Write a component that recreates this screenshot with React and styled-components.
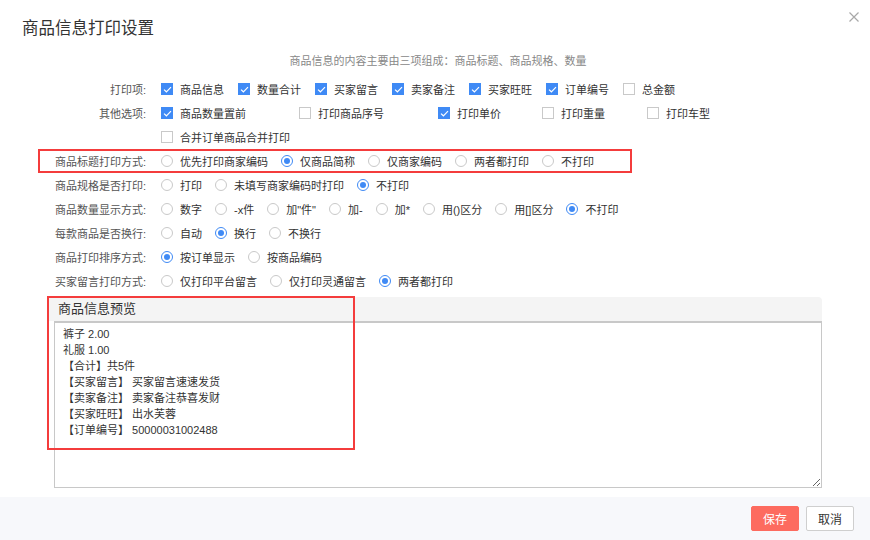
import React from "react";
import styled, { createGlobalStyle, css } from "styled-components";

const Global = createGlobalStyle`
  html, body { margin: 0; padding: 0; background: #fff; }
  body { font-family: "Liberation Sans", "Noto Sans CJK SC", sans-serif; color: #333; }
  *, *::before, *::after { box-sizing: border-box; }
`;

const Dialog = styled.div`
  width: 870px;
  height: 540px;
  display: flex;
  flex-direction: column;
  background: #fff;
  overflow: hidden;
`;

const Body = styled.div`
  flex: 1;
  display: flex;
  flex-direction: column;
`;

const Header = styled.div`
  height: 50px;
  display: flex;
  align-items: flex-start;
  justify-content: space-between;
  padding: 17px 10px 0 22px;
`;

const Title = styled.h1`
  margin: 0;
  font-size: 16.5px;
  font-weight: normal;
  line-height: 22px;
  color: #333;
`;

const Close = styled.button`
  border: 0;
  background: none;
  padding: 0;
  width: 12px;
  height: 12px;
  margin-top: -6px;
  display: flex;
  cursor: pointer;
`;

const Subtitle = styled.div`
  font-size: 11px;
  line-height: 22px;
  color: #888;
  text-align: center;
  padding-left: 6px;
  height: 22px;
  margin-bottom: 5px;
`;

const Form = styled.div`
  display: flex;
  flex-direction: column;
`;

const Row = styled.div`
  position: relative;
  display: flex;
  align-items: center;
  height: 24px;
  ${(p) =>
    p.$highlight &&
    css`
      &::after {
        content: "";
        position: absolute;
        left: 38px;
        top: 0;
        width: 594px;
        height: 24px;
        border: 2.5px solid #f43c3c;
        pointer-events: none;
      }
    `}
`;

const Label = styled.div`
  width: 146px;
  flex: none;
  text-align: right;
  font-size: 11px;
  color: #555;
  white-space: nowrap;
`;

const Options = styled.div`
  display: flex;
  align-items: center;
  margin-left: 15px;
`;

const Option = styled.label`
  display: flex;
  align-items: center;
  gap: 7px;
  font-size: 11px;
  color: #333;
  white-space: nowrap;
  margin-right: ${(p) => (p.$radio ? 13 : 14)}px;
  ${(p) =>
    p.$width &&
    css`
      width: ${p.$width}px;
      margin-right: 0;
    `}
`;

const Box = styled.span`
  width: 12px;
  height: 12px;
  flex: none;
  display: flex;
  align-items: center;
  justify-content: center;
  border: 1px solid ${(p) => (p.$on ? "#3f8af5" : "#c9c9c9")};
  background: ${(p) => (p.$on ? "#3f8af5" : "#fff")};
`;

const Circle = styled.span`
  width: 12px;
  height: 12px;
  flex: none;
  border-radius: 50%;
  border: 1px solid ${(p) => (p.$on ? "#3f8af5" : "#c9c9c9")};
  background: #fff;
  display: flex;
  align-items: center;
  justify-content: center;
  &::after {
    content: "";
    width: 6px;
    height: 6px;
    border-radius: 50%;
    background: ${(p) => (p.$on ? "#3f8af5" : "transparent")};
  }
`;

const Preview = styled.div`
  position: relative;
  margin: 4px 0 0 48px;
  width: 774px;
  display: flex;
  flex-direction: column;
  &::after {
    content: "";
    position: absolute;
    left: -1px;
    top: -1px;
    width: 308px;
    height: 154px;
    border: 2.5px solid #f43c3c;
    pointer-events: none;
  }
`;

const PreviewHead = styled.div`
  height: 24px;
  background: #f4f4f4;
  border-top-right-radius: 4px;
  padding-left: 10px;
  font-size: 13px;
  line-height: 24px;
  color: #333;
`;

const PreviewText = styled.textarea`
  margin-left: 6px;
  width: 768px;
  height: 167px;
  border: 1px solid #c8c8c8;
  border-top-width: 2px;
  padding: 3px 8px;
  font-family: "Liberation Sans", "Noto Sans CJK SC", sans-serif;
  font-size: 11px;
  line-height: 16px;
  color: #333;
  resize: both;
  outline: none;
  background: #fff;
`;

const Footer = styled.div`
  height: 43px;
  background: #f7f8fb;
  display: flex;
  align-items: center;
  justify-content: flex-end;
  gap: 7px;
  padding: 0 16px 0 0;
`;

const Button = styled.button`
  width: 48px;
  height: 25px;
  font-family: "Liberation Sans", "Noto Sans CJK SC", sans-serif;
  font-size: 12px;
  border-radius: 2px;
  cursor: pointer;
  padding: 0;
  ${(p) =>
    p.$primary
      ? css`
          background: #fd6b5f;
          border: 1px solid #fd6b5f;
          color: #fff;
        `
      : css`
          background: #fff;
          border: 1px solid #cfcfcf;
          color: #333;
        `}
`;

const Check = ({ on, children, width }) => (
  <Option $width={width}>
    <Box $on={on}>
      {on && (
        <svg width="9" height="7" viewBox="0 0 9 7">
          <path d="M1 3.6 L3.4 5.8 L8 1.2" fill="none" stroke="#fff" strokeWidth="1.2" />
        </svg>
      )}
    </Box>
    {children}
  </Option>
);

const Radio = ({ on, children }) => (
  <Option $radio>
    <Circle $on={on} />
    {children}
  </Option>
);

const RadioRow = ({ label, items, value, highlight }) => (
  <Row $highlight={highlight}>
    <Label>{label}</Label>
    <Options>
      {items.map((t) => (
        <Radio key={t} on={t === value}>
          {t}
        </Radio>
      ))}
    </Options>
  </Row>
);

const previewText = [
  "裤子 2.00",
  "礼服 1.00",
  "【合计】共5件",
  "【买家留言】 买家留言速速发货",
  "【卖家备注】 卖家备注恭喜发财",
  "【买家旺旺】 出水芙蓉",
  "【订单编号】 50000031002488",
].join("\n");

export default function App() {
  return (
    <>
      <Global />
      <Dialog>
        <Body>
          <Header>
            <Title>商品信息打印设置</Title>
            <Close aria-label="关闭">
              <svg width="12" height="12" viewBox="0 0 12 12">
                <path d="M1.5 1.5 L10.5 10.5 M10.5 1.5 L1.5 10.5" stroke="#a8a8a8" strokeWidth="1.2" />
              </svg>
            </Close>
          </Header>
          <Subtitle>商品信息的内容主要由三项组成：商品标题、商品规格、数量</Subtitle>
          <Form>
            <Row>
              <Label>打印项:</Label>
              <Options>
                <Check on>商品信息</Check>
                <Check on>数量合计</Check>
                <Check on>买家留言</Check>
                <Check on>卖家备注</Check>
                <Check on>买家旺旺</Check>
                <Check on>订单编号</Check>
                <Check>总金额</Check>
              </Options>
            </Row>
            <Row>
              <Label>其他选项:</Label>
              <Options>
                <Check on width={138}>商品数量置前</Check>
                <Check width={139}>打印商品序号</Check>
                <Check on width={104}>打印单价</Check>
                <Check width={105}>打印重量</Check>
                <Check>打印车型</Check>
              </Options>
            </Row>
            <Row>
              <Label />
              <Options>
                <Check>合并订单商品合并打印</Check>
              </Options>
            </Row>
            <RadioRow
              highlight
              label="商品标题打印方式:"
              items={["优先打印商家编码", "仅商品简称", "仅商家编码", "两者都打印", "不打印"]}
              value="仅商品简称"
            />
            <RadioRow
              label="商品规格是否打印:"
              items={["打印", "未填写商家编码时打印", "不打印"]}
              value="不打印"
            />
            <RadioRow
              label="商品数量显示方式:"
              items={["数字", "-x件", '加"件"', "加-", "加*", "用()区分", "用[]区分", "不打印"]}
              value="不打印"
            />
            <RadioRow label="每款商品是否换行:" items={["自动", "换行", "不换行"]} value="换行" />
            <RadioRow label="商品打印排序方式:" items={["按订单显示", "按商品编码"]} value="按订单显示" />
            <RadioRow
              label="买家留言打印方式:"
              items={["仅打印平台留言", "仅打印灵通留言", "两者都打印"]}
              value="两者都打印"
            />
          </Form>
          <Preview>
            <PreviewHead>商品信息预览</PreviewHead>
            <PreviewText readOnly value={previewText} />
          </Preview>
        </Body>
        <Footer>
          <Button $primary>保存</Button>
          <Button>取消</Button>
        </Footer>
      </Dialog>
    </>
  );
}
